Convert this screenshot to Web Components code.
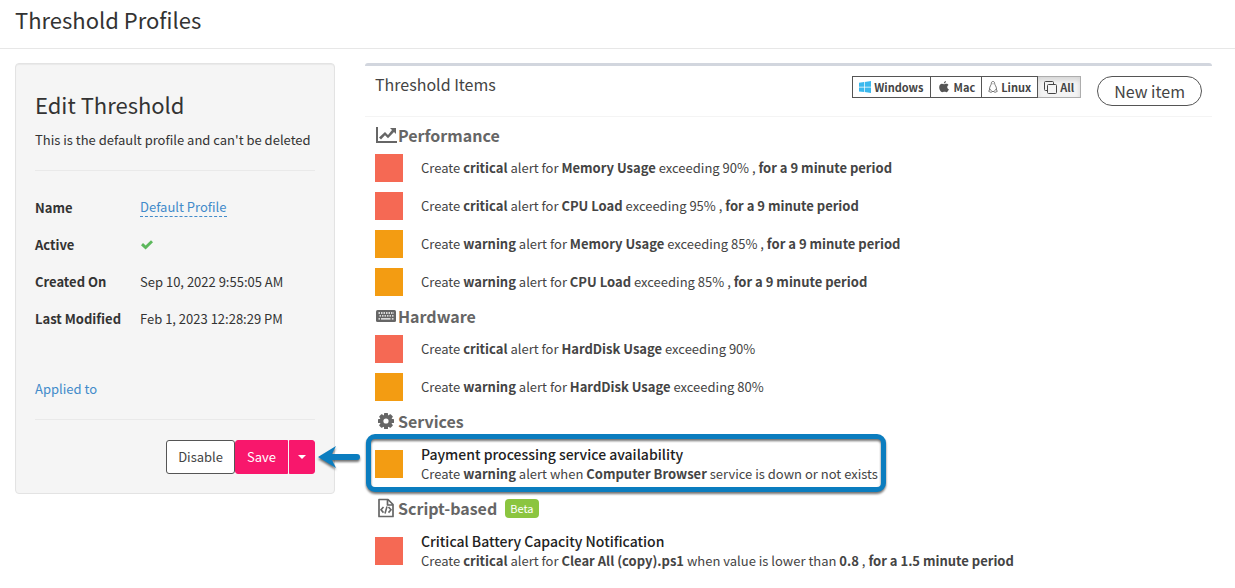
<!DOCTYPE html>
<html lang="en">
<head>
<meta charset="utf-8">
<title>Threshold Profiles</title>
<style>
	body {
		--text: #333;
		--muted: #666;
		--link: #428bca;
		--accent: #f8176c;
		--critical: #f56954;
		--warning: #f39c12;
		--mark: #0b7dbf;

		margin: 0;
		background: #fff;
		color: var(--text);
		font-family: "Noto Sans CJK SC", "Noto Sans", sans-serif;
		font-size: 13px;
		line-height: 20px;
	}
</style>
</head>
<body>
<profile-page>
	<span slot="title">Threshold Profiles</span>

	<profile-card slot="side">
		<span slot="title">Edit Threshold</span>
		<span slot="note">This is the default profile and can't be deleted</span>
		<profile-field label="Name"><profile-link dashed>Default Profile</profile-link></profile-field>
		<profile-field label="Active"><ui-icon name="check"></ui-icon></profile-field>
		<profile-field label="Created On">Sep 10, 2022 9:55:05 AM</profile-field>
		<profile-field label="Last Modified">Feb 1, 2023 12:28:29 PM</profile-field>
		<profile-link slot="applied">Applied to</profile-link>
		<save-actions slot="actions"></save-actions>
	</profile-card>

	<threshold-panel>
		<span slot="title">Threshold Items</span>
		<platform-filter slot="tools"></platform-filter>
		<pill-button slot="tools">New item</pill-button>

		<threshold-group icon="chart">
			<span slot="title">Performance</span>
			<threshold-item level="critical">Create <b>critical</b> alert for <b>Memory Usage</b> exceeding 90% , <b>for a 9 minute period</b></threshold-item>
			<threshold-item level="critical">Create <b>critical</b> alert for <b>CPU Load</b> exceeding 95% , <b>for a 9 minute period</b></threshold-item>
			<threshold-item level="warning">Create <b>warning</b> alert for <b>Memory Usage</b> exceeding 85% , <b>for a 9 minute period</b></threshold-item>
			<threshold-item level="warning">Create <b>warning</b> alert for <b>CPU Load</b> exceeding 85% , <b>for a 9 minute period</b></threshold-item>
		</threshold-group>

		<threshold-group icon="keyboard">
			<span slot="title">Hardware</span>
			<threshold-item level="critical">Create <b>critical</b> alert for <b>HardDisk Usage</b> exceeding 90%</threshold-item>
			<threshold-item level="warning">Create <b>warning</b> alert for <b>HardDisk Usage</b> exceeding 80%</threshold-item>
		</threshold-group>

		<threshold-group icon="cog">
			<span slot="title">Services</span>
			<threshold-item level="warning" titled marked>
				<span slot="title">Payment processing service availability</span>
				Create <b>warning</b> alert when <b>Computer Browser</b> service is down or not exists
			</threshold-item>
		</threshold-group>

		<threshold-group icon="script">
			<span slot="title">Script-based</span>
			<beta-badge slot="badge">Beta</beta-badge>
			<threshold-item level="critical" titled>
				<span slot="title">Critical Battery Capacity Notification</span>
				Create <b>critical</b> alert for <b>Clear All (copy).ps1</b> when value is lower than <b>0.8</b> , <b>for a 1.5 minute period</b>
			</threshold-item>
		</threshold-group>
	</threshold-panel>
</profile-page>

<script>
const icons = {
	check: `<svg width="14" height="12" viewBox="0 0 14 12"><path fill="#5cb85c" d="M1 6.2 3 4.1l2.6 2.5L11 1.2l2 2-7.4 7.4z"/></svg>`,
	chart: `<svg width="22" height="18" viewBox="0 0 22 18"><path fill="#666" d="M0 1h2v14h19v2H0z"/><path fill="#666" d="M14 2h6v6l-2-2-6 6.200-3-3-4 4.300-2-2L9 6l3 3 4-5z"/></svg>`,
	keyboard: `<svg width="22" height="18" viewBox="0 0 22 18"><rect y="3" width="20" height="12" rx="1.500" fill="#666"/><path fill="none" stroke="#fff" stroke-width="1.300" stroke-dasharray="1.500 1" d="M2.500 6h15.500M3.500 8.800h14"/><path fill="none" stroke="#fff" stroke-width="1.300" d="M2.500 11.800H4M5 11.800h9.500M15.800 11.800h1.700"/></svg>`,
	cog: `<svg width="22" height="18" viewBox="0 0 22 18"><g fill="#666" transform="translate(10 9)"><rect x="-2" y="-8" width="4" height="16" rx=".6"/><rect x="-2" y="-8" width="4" height="16" rx=".6" transform="rotate(45)"/><rect x="-2" y="-8" width="4" height="16" rx=".6" transform="rotate(90)"/><rect x="-2" y="-8" width="4" height="16" rx=".6" transform="rotate(135)"/><circle r="6.300"/><circle r="2.600" fill="#fff"/></g></svg>`,
	script: `<svg width="22" height="20" viewBox="0 0 22 20"><path fill="none" stroke="#666" stroke-width="1.700" stroke-linejoin="round" d="M3 1.500h9l5 5v12H3zM11.500 1.500v5.500H17"/><path fill="none" stroke="#666" stroke-width="1.600" d="M7.500 9 5 11.800l2.500 2.800M12.500 9l2.500 2.800-2.500 2.800M11 8.500l-2 7"/></svg>`,
	windows: `<svg width="12" height="12" viewBox="0 0 12 12"><path fill="#3bb9ee" d="M0 1.700 5 1v4.700H0zM5.700.9 12 0v5.700H5.700zM0 6.400h5v4.700l-5-.7zM5.700 6.400H12V12l-6.300-.9z"/></svg>`,
	apple: `<svg width="14" height="12" viewBox="-1 0 14 12"><path fill="#555" d="M7.900 0c.1 1.300-.9 2.500-2.100 2.600C5.700 1.400 6.700.2 7.900 0zM6 3.300c.6 0 1.300-.6 2.300-.6 1 0 1.800.5 2.200 1.200-1.900 1.100-1.500 3.600.4 4.300-.5 1.400-1.500 3-2.600 3-.8 0-1.100-.4-2-.4s-1.300.4-2 .4C2.800 11.200 1.200 8.500 1.200 6.300c0-2.200 1.300-3.500 2.700-3.500.9 0 1.500.5 2.100.5z"/></svg>`,
	linux: `<svg width="10" height="12" viewBox="0 0 10 12"><path fill="#fff" stroke="#666" stroke-width=".9" d="M3.400 2.200C3.400 1 4 .5 5 .5s1.600.6 1.600 1.800c0 1.700 1.900 3 1.900 5.700L8 10.500H2L1.500 8c0-2.600 1.900-4 1.900-5.800z"/><path fill="#fff" stroke="#666" stroke-width=".8" d="M2 8.200.6 10.300l2.700 1.200.7-1zM8 8.200l1.400 2.100-2.700 1.200-.7-1z"/><path fill="#888" d="m4.200 2.700.8-.4.800.4-.8.700z"/></svg>`,
	copy: `<svg width="13" height="13" viewBox="0 0 13 13"><path fill="none" stroke="#444" d="M3.500 9.500h-2a1 1 0 0 1-1-1v-7a1 1 0 0 1 1-1h7a1 1 0 0 1 1 1v2"/><rect x="3.500" y="3.500" width="9" height="9" rx="1" fill="none" stroke="#444"/></svg>`,
	arrow: `<svg width="44" height="30" viewBox="0 0 44 30"><path fill="#0b7dbf" d="M1 14 19 3l-4 8h25a3 3 0 0 1 0 6H15l4 8z"/></svg>`
}

function define(name, html) {
	const template = document.createElement('template')
	template.innerHTML = html

	customElements.define(name, class extends HTMLElement {
		constructor() {
			super()
			this.attachShadow({ mode: 'open' })
			this.shadowRoot.appendChild(template.content.cloneNode(true))
		}

		connectedCallback() {
			const label = this.shadowRoot.querySelector('[data-label]')
			const icon = this.shadowRoot.querySelector('[data-icon]')

			if (label) {
				label.textContent = this.getAttribute('label')
			}

			if (icon) {
				icon.setAttribute('name', this.getAttribute('icon'))
			}
		}
	})
}

class UiIcon extends HTMLElement {
	constructor() {
		super()
		this.attachShadow({ mode: 'open' })
	}

	static get observedAttributes() {
		return ['name']
	}

	attributeChangedCallback() {
		this.shadowRoot.innerHTML = `
			<style>
				:host { display: inline-flex; flex: none; }
				svg { display: block; }
			</style>
			${icons[this.getAttribute('name')] || ''}
		`
	}
}

customElements.define('ui-icon', UiIcon)

define('profile-page', `
	<style>
		:host { display: block; }

		header {
			padding: 3px 15px 13px;
			border-bottom: 1px solid #e7e7e7;
		}

		h1 {
			margin: 0;
			font-size: 22px;
			font-weight: 400;
			line-height: 32px;
		}

		main {
			display: grid;
			grid-template-columns: 320px minmax(0, 1fr);
			align-items: start;
			gap: 30px;
			padding: 14px 23px 0 15px;
		}
	</style>
	<header><h1><slot name="title"></slot></h1></header>
	<main>
		<slot name="side"></slot>
		<slot></slot>
	</main>
`)

define('profile-card', `
	<style>
		:host {
			display: block;
			box-sizing: border-box;
			padding: 24px 19px 19px;
			border: 1px solid #e3e3e3;
			border-radius: 4px;
			background: #f5f5f5;
			box-shadow: inset 0 1px 1px rgb(0 0 0 / 5%);
		}

		h2 {
			margin: 0 0 10px;
			font-size: 22px;
			font-weight: 400;
			line-height: 32px;
		}

		p { margin: 0; }

		.fields {
			padding: 18px 0 34px;
			margin-top: 20px;
			border-top: 1px solid #e9e9e9;
		}

		.applied {
			padding: 8px 0 20px;
			border-bottom: 1px solid #e9e9e9;
		}

		footer {
			display: flex;
			justify-content: flex-end;
			padding-top: 20px;
		}
	</style>
	<h2><slot name="title"></slot></h2>
	<p><slot name="note"></slot></p>
	<div class="fields"><slot></slot></div>
	<div class="applied"><slot name="applied"></slot></div>
	<footer><slot name="actions"></slot></footer>
`)

define('profile-field', `
	<style>
		:host {
			display: grid;
			grid-template-columns: 105px minmax(0, 1fr);
			align-items: center;
			height: 37px;
		}

		.value { display: flex; align-items: center; }
	</style>
	<b data-label></b>
	<span class="value"><slot></slot></span>
`)

define('profile-link', `
	<style>
		:host { display: inline-flex; }

		a {
			color: var(--link);
			line-height: 18px;
			text-decoration: none;
		}

		:host([dashed]) a { border-bottom: 1px dashed var(--link); }
	</style>
	<a href="#"><slot></slot></a>
`)

define('save-actions', `
	<style>
		:host { display: flex; }

		button {
			box-sizing: border-box;
			height: 34px;
			padding: 0 11px;
			border: 1px solid var(--accent);
			border-radius: 3px;
			background: var(--accent);
			color: #fff;
			font: inherit;
		}

		.plain {
			border-color: #555;
			background: #fff;
			color: #444;
		}

		.save { border-radius: 3px 0 0 3px; }

		.more {
			padding: 0 8px;
			margin-left: 1px;
			border-radius: 0 3px 3px 0;
		}

		.more::before {
			content: '';
			display: block;
			border: 4px solid transparent;
			border-top-color: #fff;
			border-bottom: 0;
		}
	</style>
	<button class="plain" type="button">Disable</button>
	<button class="save" type="button">Save</button>
	<button class="more" type="button" aria-label="More save options"></button>
`)

define('threshold-panel', `
	<style>
		:host {
			display: block;
			border-top: 3px solid #d2d6de;
			border-radius: 3px;
		}

		header {
			display: flex;
			align-items: flex-start;
			justify-content: space-between;
			padding: 10px;
			border-bottom: 1px solid #f4f4f4;
		}

		h3 {
			margin: 0;
			color: #444;
			font-size: 16px;
			font-weight: 400;
			line-height: 16px;
		}

		.tools { display: flex; align-items: flex-start; gap: 16px; }
		.body { padding: 3px 10px; }
	</style>
	<header>
		<h3><slot name="title"></slot></h3>
		<div class="tools"><slot name="tools"></slot></div>
	</header>
	<div class="body"><slot></slot></div>
`)

define('platform-filter', `
	<style>
		:host { display: flex; }

		button {
			display: flex;
			align-items: center;
			gap: 3px;
			box-sizing: border-box;
			height: 22px;
			padding: 0 6px;
			border: 1px solid #555;
			background: #fff;
			color: #444;
			font: inherit;
			font-size: 11px;
			font-weight: 700;
		}

		button + button { border-left: 0; }
		button:first-child { border-radius: 3px 0 0 3px; }

		button:last-child {
			border-color: #adadad;
			background: #f4f4f4;
			box-shadow: inset 0 3px 5px rgb(0 0 0 / 13%);
		}
	</style>
	<button type="button"><ui-icon name="windows"></ui-icon>Windows</button>
	<button type="button"><ui-icon name="apple"></ui-icon>Mac</button>
	<button type="button"><ui-icon name="linux"></ui-icon>Linux</button>
	<button type="button" aria-pressed="true"><ui-icon name="copy"></ui-icon>All</button>
`)

define('pill-button', `
	<style>
		:host { display: block; }

		button {
			box-sizing: border-box;
			height: 30px;
			padding: 0 16px;
			border: 1px solid #555;
			border-radius: 15px;
			background: #fff;
			color: #444;
			font: inherit;
			font-size: 16px;
		}
	</style>
	<button type="button"><slot></slot></button>
`)

define('threshold-group', `
	<style>
		:host { display: block; }

		h4 {
			display: flex;
			align-items: center;
			margin: 0;
			padding: 2px 1px 1px;
			color: var(--muted);
			font-size: 16px;
			font-weight: 700;
			line-height: 26px;
		}
	</style>
	<h4>
		<ui-icon data-icon></ui-icon>
		<slot name="title"></slot>
		<slot name="badge"></slot>
	</h4>
	<slot></slot>
`)

define('beta-badge', `
	<style>
		:host {
			margin-left: 8px;
			padding: 0 5px;
			border-radius: 4px;
			background: #8bc540;
			color: #fff;
			font-size: 11px;
			font-weight: 400;
			line-height: 19px;
		}
	</style>
	<slot></slot>
`)

define('threshold-item', `
	<style>
		:host {
			display: flex;
			align-items: center;
			gap: 18px;
			position: relative;
			width: fit-content;
			height: 38px;
			color: #444;
		}

		:host([titled]) { height: 58px; }

		.level {
			flex: none;
			width: 28px;
			height: 28px;
			background: var(--warning);
		}

		:host([level="critical"]) .level { background: var(--critical); }

		.title {
			color: #222;
			font-size: 14px;
			font-weight: 500;
		}

		/* callout drawn over the row, with its arrow pointing at the save button */
		.mark { display: none; }

		:host([marked]) .mark {
			display: block;
			position: absolute;
			inset: -1px -8px 1px -9px;
			border: 5px solid var(--mark);
			border-radius: 9px;
			filter: drop-shadow(0 2px 1px rgb(0 0 0 / 55%));
		}

		.mark ui-icon {
			position: absolute;
			top: 4px;
			right: calc(100% + 10px);
		}
	</style>
	<span class="level"></span>
	<div>
		<div class="title"><slot name="title"></slot></div>
		<div><slot></slot></div>
	</div>
	<div class="mark"><ui-icon name="arrow"></ui-icon></div>
`)
</script>
</body>
</html>
